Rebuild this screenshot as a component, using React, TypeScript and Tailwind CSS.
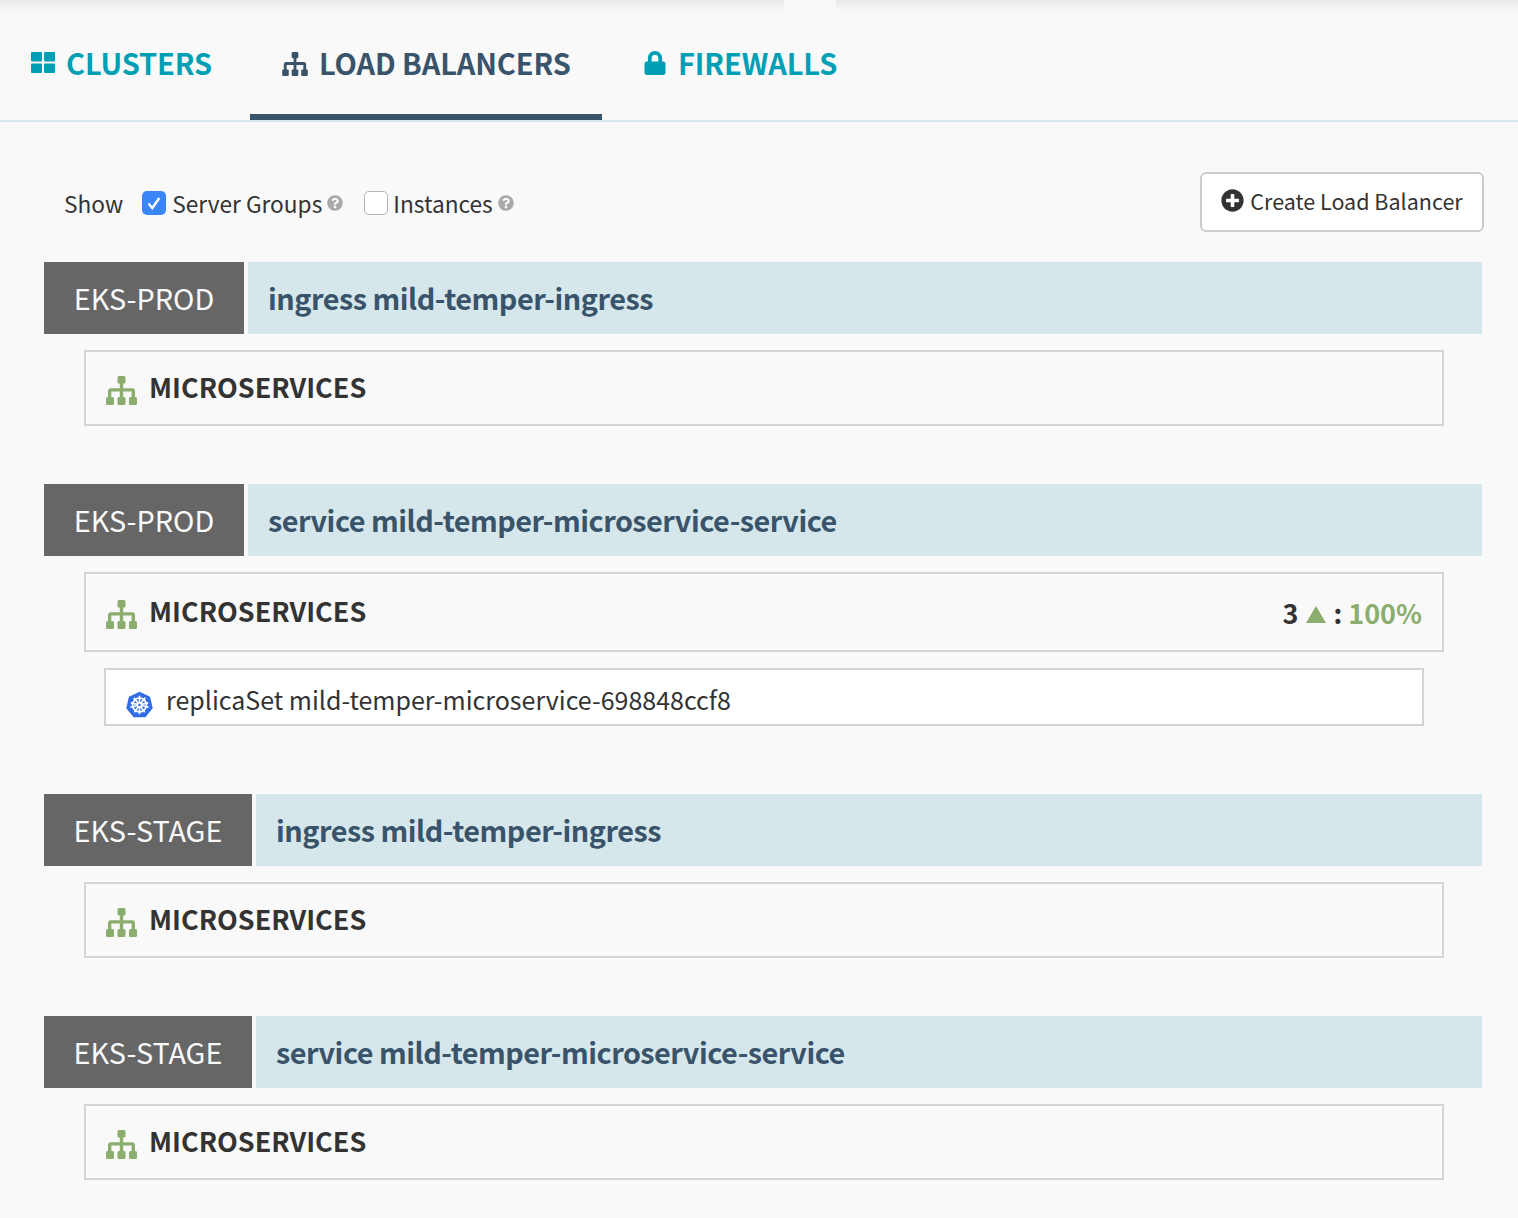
import React from "react";
import { FaLock, FaQuestionCircle, FaPlusCircle } from "react-icons/fa";

const Sitemap = ({ className }: { className: string }) => (
  <svg viewBox="0 0 31 29" className={`shrink-0 ${className}`} fill="currentColor">
    <rect x="11.500" y="0" width="8" height="7.500" rx="1.500" />
    <rect x="0" y="21" width="8" height="8" rx="1.500" />
    <rect x="11.500" y="21" width="8" height="8" rx="1.500" />
    <rect x="23" y="21" width="8" height="8" rx="1.500" />
    <path d="M13.800 7h3.400v5.200h8.800a3 3 0 0 1 3 3V22h-3.400v-6.400h-8.400V22h-3.400v-6.400H5.400V22H2v-6.800a3 3 0 0 1 3-3h8.800z" />
  </svg>
);

const Tiles = () => (
  <svg viewBox="0 0 24 21" className="w-6 h-[21px] mt-[4px] shrink-0 text-[#009fb5]" fill="currentColor">
    <rect x="0" y="0" width="11" height="9.500" rx="1" />
    <rect x="13" y="0" width="11" height="9.500" rx="1" />
    <rect x="0" y="11.500" width="11" height="9.500" rx="1" />
    <rect x="13" y="11.500" width="11" height="9.500" rx="1" />
  </svg>
);

const Kube = () => (
  <svg viewBox="0 0 28 28" className="w-[27px] h-[27px] shrink-0 mt-[14px]">
    <path d="M14 .8 25 6l2.700 11.800-7.600 9.400H7.900L.3 17.800 3 6z" fill="#326ce5" />
    <g stroke="#fff" fill="none" strokeWidth="1.700">
      <circle cx="14" cy="14.500" r="7.200" />
      <circle cx="14" cy="14.500" r="2.200" />
      <path d="M14 5v7.500M14 16.500V24M5 12.300l7 1.600M16 15l7.500 1.800M23 12.300l-7 1.600M12 15l-7.500 1.800M8 7l4.700 5.800M15.300 16.200l4 6M20 7l-4.700 5.800M12.700 16.200l-4 6" />
    </g>
  </svg>
);

const Tab = ({ active, icon, label, className }: { active?: boolean; icon: React.ReactNode; label: string; className: string }) => (
  <div className={`flex items-center gap-[11px] h-[108px] pb-[6px] text-[29px] font-semibold whitespace-nowrap border-b-[6px] ${active ? "border-[#39546a] text-[#39546a]" : "border-transparent text-[#009fb5]"} ${className}`}>
    {icon}
    <span className="leading-none pt-1 tracking-[-0.1px]">{label}</span>
  </div>
);

const Header = ({ account, accountWidth, title }: { account: string; accountWidth: string; title: string }) => (
  <div className="flex gap-1 h-[72px] ml-[44px] mr-[36px]">
    <div className={`${accountWidth} bg-[#666666] text-[#f9f9f9] text-[28.8px] flex items-center justify-center`}>{account}</div>
    <div className="flex-1 bg-[#d6e7ec] text-[#39546a] text-[28.8px] font-semibold tracking-[-0.48px] flex items-center pl-5">{title}</div>
  </div>
);

const Cluster = ({ health, height }: { health?: boolean; height: string }) => (
  <div className={`flex items-center justify-between ${height} mt-4 ml-[84px] mr-[74px] border-2 border-[#d4d4d4] pl-5 pr-5`}>
    <div className="flex items-center gap-3 text-[27px] font-semibold text-[#333333]">
      <Sitemap className="w-[31px] h-[29px] text-[#8bae6e] mt-1" />
      <span className="pb-1">MICROSERVICES</span>
    </div>
    {health && (
      <div className="flex items-center text-[27px] font-semibold text-[#333333]">
        <span>3</span>
        <span className="ml-[8px] mt-1 w-0 h-0 border-l-[10px] border-r-[10px] border-b-[17px] border-l-transparent border-r-transparent border-b-[#8bae6e]" />
        <span className="ml-[7px]">:</span>
        <span className="ml-[6px] text-[#8bae6e]">100%</span>
      </div>
    )}
  </div>
);

export default function App() {
  return (
    <div className="w-[1518px] h-[1218px] overflow-hidden bg-[#f9f9f9] leading-none" style={{ fontFamily: '"Noto Sans CJK SC", "Noto Sans", sans-serif' }}>
      <div className="flex h-3">
        <div className="w-[784px] bg-gradient-to-b from-[#e9e9e9] to-[#f9f9f9]" />
        <div className="w-[52px]" />
        <div className="flex-1 bg-gradient-to-b from-[#e9e9e9] to-[#f9f9f9]" />
      </div>
      <div className="flex h-[110px] border-b-2 border-[#d9e8ee]">
        <Tab className="pl-[31px] pr-8 w-[250px]" icon={<Tiles />} label="CLUSTERS" />
        <Tab active className="px-8 w-[352px]" icon={<Sitemap className="w-[26px] h-[24px] mt-2" />} label="LOAD BALANCERS" />
        <Tab className="pl-[41px]" icon={<FaLock className="w-[24px] h-[24px] mt-[6px]" />} label="FIREWALLS" />
      </div>

      <div className="flex justify-between items-center mt-[50px] h-[60px] pl-[64px] pr-[34px]">
        <div className="flex items-center pt-[2px] text-[22.7px] text-[#333333] whitespace-nowrap">
          <span className="pt-[2px]">Show</span>
          <span className="ml-[19px] w-6 h-6 rounded-[5px] bg-[#3b86f7] flex items-center justify-center">
            <svg viewBox="0 0 24 24" className="w-6 h-6" fill="none" stroke="#fff" strokeWidth="2.400"><path d="M6.500 12.500l3.800 4.500 7-10" /></svg>
          </span>
          <span className="ml-[6px] pt-[2px]">Server Groups</span>
          <FaQuestionCircle className="ml-[5px] w-4 h-4 text-[#a9a9a9]" />
          <span className="ml-[21px] w-6 h-6 rounded-[5px] bg-white border border-[#b5b5b5]" />
          <span className="ml-[5px] pt-[2px]">Instances</span>
          <FaQuestionCircle className="ml-[5px] w-4 h-4 text-[#a9a9a9]" />
        </div>
        <div className="w-[284px] h-[60px] bg-white border-2 border-[#cccccc] rounded-[6px] flex items-center justify-center gap-[6px] text-[21.5px] text-[#333333] whitespace-nowrap">
          <FaPlusCircle className="w-[23px] h-[23px] -mt-1 shrink-0" />
          <span className="pb-[2px]">Create Load Balancer</span>
        </div>
      </div>

      <div className="mt-[30px]">
        <Header account="EKS-PROD" accountWidth="w-[200px]" title="ingress mild-temper-ingress" />
        <Cluster height="h-[76px]" />
      </div>

      <div className="mt-[58px]">
        <Header account="EKS-PROD" accountWidth="w-[200px]" title="service mild-temper-microservice-service" />
        <Cluster health height="h-[80px]" />
        <div className="flex items-center gap-[13px] h-[58px] mt-4 ml-[104px] mr-[94px] bg-white border-2 border-[#d4d4d4] pl-[20px] text-[25px] text-[#333333]">
          <Kube />
          <span className="pt-[4px]">replicaSet mild-temper-microservice-698848ccf8</span>
        </div>
      </div>

      <div className="mt-[68px]">
        <Header account="EKS-STAGE" accountWidth="w-[208px]" title="ingress mild-temper-ingress" />
        <Cluster height="h-[76px]" />
      </div>

      <div className="mt-[58px]">
        <Header account="EKS-STAGE" accountWidth="w-[208px]" title="service mild-temper-microservice-service" />
        <Cluster height="h-[76px]" />
      </div>
    </div>
  );
}
